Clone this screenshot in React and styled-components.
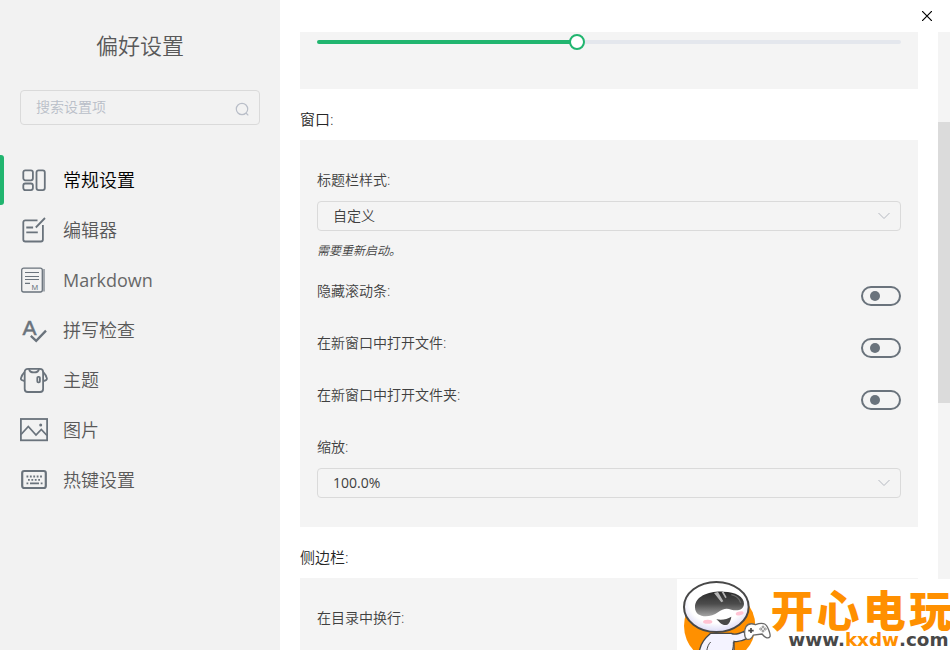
import React, { useState } from "react";
import styled, { createGlobalStyle } from "styled-components";

const GlobalStyle = createGlobalStyle`
  * {
    box-sizing: border-box;
  }
  body {
    margin: 0;
    background: #ffffff;
    color: #404040;
    font-family: "Open Sans", "Noto Sans CJK SC", sans-serif;
    font-size: 14px;
    font-weight: 350;
    overflow: hidden;
  }
  input, select, button {
    font-family: inherit;
    font-weight: inherit;
  }
`;

const Page = styled.div`
  display: flex;
  height: 100vh;
`;

/* sidebar */
const Sidebar = styled.aside`
  flex: 0 0 280px;
  padding-top: 30px;
  background: #f2f2f2;
`;
const Title = styled.h1`
  margin: 0;
  font-size: 22px;
  font-weight: 350;
  line-height: 30px;
  text-align: center;
  color: #595959;
`;
const Search = styled.label`
  display: flex;
  align-items: center;
  height: 35px;
  margin: 30px 20px;
  padding: 0 10px 2px 15px;
  border: 1px solid #dadada;
  border-radius: 4px;
  svg {
    margin-top: 5px;
  }
`;
const SearchInput = styled.input`
  flex: 1;
  min-width: 0;
  padding: 0;
  border: none;
  outline: none;
  background: none;
  font-size: 14px;
  color: #595959;
  &::placeholder {
    color: #b9bec8;
  }
`;
const NavItem = styled.a`
  display: flex;
  align-items: center;
  gap: 15px;
  height: 50px;
  padding-left: 20px;
  position: relative;
  font-size: 18px;
  text-decoration: none;
  color: ${(props) => (props.$active ? "#000000" : "#595959")};
  &::before {
    content: "";
    position: absolute;
    left: 0;
    top: 0;
    width: 4px;
    height: 100%;
    border-radius: 0 3px 3px 0;
    background: ${(props) => (props.$active ? "#21b56f" : "transparent")};
  }
`;
const NavText = styled.span`
  padding-bottom: ${(props) => (props.$latin ? "0" : "2px")};
  font-weight: ${(props) => (props.$latin ? 400 : 350)};
  opacity: ${(props) => (props.$latin ? 0.9 : 1)};
`;
const NavIcon = styled.svg`
  width: 28px;
  height: 28px;
  fill: none;
  stroke: #6a737c;
  stroke-width: 1.8;
`;

/* right side */
const Main = styled.main`
  flex: 1;
  min-width: 0;
  display: flex;
  flex-direction: column;
`;
const TitleBar = styled.div`
  flex: 0 0 32px;
  display: flex;
  justify-content: flex-end;
`;
const CloseButton = styled.button`
  display: flex;
  align-items: center;
  justify-content: center;
  width: 46px;
  padding: 0;
  border: none;
  background: none;
`;
const Body = styled.div`
  flex: 1;
  min-height: 0;
  display: flex;
`;
const Content = styled.div`
  flex: 1;
  min-width: 0;
  padding: 0 20px;
  overflow: hidden;
`;
const Track = styled.div`
  flex: 0 0 12px;
  display: grid;
  grid-template-rows: 90fr 281fr 247fr;
  background: #f4f4f4;
`;
const Thumb = styled.div`
  grid-row: 2;
  background: #dbdbdb;
`;
const SectionTitle = styled.h2`
  margin: 0;
  padding: 20px 0 10px;
  font-size: 15px;
  font-weight: 350;
  line-height: 21px;
  color: #262626;
`;
const Block = styled.section`
  display: flex;
  flex-direction: column;
  gap: 20px;
  padding: ${(props) => (props.$cut ? "2px 17px 39px" : "29px 17px")};
  background: #f4f4f4;
`;
const Label = styled.label`
  display: block;
  line-height: 22px;
  color: #404040;
`;
const Range = styled.input`
  appearance: none;
  display: block;
  width: 100%;
  height: 16px;
  margin: 0;
  background: none;
  &::-webkit-slider-runnable-track {
    height: 4px;
    border-radius: 2px;
    background: linear-gradient(to right, #21b56f var(--fill), #e4e7ed var(--fill));
  }
  &::-webkit-slider-thumb {
    appearance: none;
    width: 16px;
    height: 16px;
    margin-top: -6px;
    border: 2px solid #21b56f;
    border-radius: 50%;
    background: #ffffff;
  }
`;
const SelectBox = styled.div`
  position: relative;
  margin-top: 10px;
  svg {
    position: absolute;
    right: 11px;
    top: 9px;
    pointer-events: none;
  }
`;
const Select = styled.select`
  appearance: none;
  display: block;
  width: 100%;
  height: 30px;
  padding: 0 15px 2px;
  border: 1px solid #dadada;
  border-radius: 4px;
  background: none;
  font-size: 14px;
  font-weight: ${(props) => (props.$latin ? 400 : 350)};
  color: #404040;
`;
const Note = styled.div`
  margin-top: 11px;
  font-size: 12px;
  font-style: italic;
  line-height: 18px;
  color: #404040;
`;
const SwitchRow = styled.div`
  display: flex;
  justify-content: space-between;
  align-items: flex-start;
  height: 32px;
`;
const Switch = styled.input`
  appearance: none;
  display: flex;
  align-items: center;
  justify-content: ${(props) => (props.checked ? "flex-end" : "flex-start")};
  width: 40px;
  height: 20px;
  margin: 6px 0 0;
  padding: 0 7px;
  border: 2px solid #6a737c;
  border-radius: 10px;
  &::before {
    content: "";
    width: 10px;
    height: 10px;
    border-radius: 50%;
    background: #6a737c;
  }
`;
const Badge = styled.svg`
  position: fixed;
  right: 0;
  bottom: 0;
  width: 273px;
  height: 71px;
  background: #ffffff;
`;

const GeneralIcon = () => (
  <NavIcon viewBox="0 0 28 28">
    <rect x="3.3" y="4.3" width="9.6" height="10" rx="2" />
    <rect x="3.3" y="17.5" width="9.6" height="6.6" rx="2" />
    <rect x="16.5" y="4.3" width="8.3" height="19.8" rx="2" />
  </NavIcon>
);

const EditorIcon = () => (
  <NavIcon viewBox="0 0 28 28">
    <path d="M17.5 4.3H5.3a2 2 0 0 0-2 2v17.2a2 2 0 0 0 2 2h15.6a2 2 0 0 0 2-2V9" />
    <path d="M25 2L15.8 11.5M6.3 11.5h6.8M6.3 16.3h11.5" />
  </NavIcon>
);

const MarkdownIcon = () => (
  <NavIcon viewBox="0 0 28 28">
    <path d="M23.8 3v22.5" stroke="#a3a8ae" strokeWidth="2.4" />
    <rect x="1.7" y="2.2" width="20.6" height="23.8" rx="2" strokeWidth="1.3" />
    <path d="M5 6.5h14M5 10.5h14M5 13.5h14M5 17.3h5" strokeWidth="1.2" />
    <text x="11.6" y="23.8" fontSize="8" fontFamily="Liberation Sans" fill="#6a737c" stroke="none">M</text>
  </NavIcon>
);

const SpellIcon = () => (
  <NavIcon viewBox="0 0 28 28">
    <text x="2.4" y="18.6" fontSize="21" fontWeight="400" fontFamily="Liberation Sans" fill="#6a737c" style={{ strokeWidth: 0.5 }}>A</text>
    <path d="M10.8 19.8l5.4 5L26 14.6" strokeWidth="2.3" />
  </NavIcon>
);

const ThemeIcon = () => (
  <NavIcon viewBox="0 0 28 28">
    <path d="M8.500 2.800H8C6 2.800 4.700 3.800 4.700 6v17a3 3 0 0 0 3 3h12.400a3 3 0 0 0 3-3V6c0-2.200-1.300-3.200-3.300-3.200z" />
    <path d="M9 3c.8 4.600 9.200 4.600 10 0M4.700 5.800C2.500 8 1.300 10.500 .9 12.400c-.2 1.200 1.600 2.200 3.600 2.600M23.100 5.800c2.200 2.200 3.400 4.700 3.800 6.600 .2 1.200-1.600 2.200-3.600 2.600" />
    <rect x="17.300" y="10.800" width="2.600" height="5.500" rx="1" />
  </NavIcon>
);

const ImageIcon = () => (
  <NavIcon viewBox="0 0 28 28">
    <rect x="0.900" y="3" width="26.200" height="21.300" />
    <path d="M1 18.500l7.300-8L16 19l5.300-5.500 5.700 6" />
    <circle cx="20.700" cy="9" r="1.500" fill="#6a737c" stroke="none" />
  </NavIcon>
);

const KeyboardIcon = () => (
  <NavIcon viewBox="0 0 28 28">
    <rect x="2.200" y="5" width="23.600" height="17" rx="2" strokeWidth="2.200" />
    <path d="M6.500 10.500h16" strokeDasharray="1.800 1.600" />
    <path d="M8 13.900h13" strokeDasharray="1.800 1.600" />
    <path d="M6.500 17.400h1.800M10 17.400h9M20.700 17.400h1.800" />
  </NavIcon>
);

const Chevron = () => (
  <svg width="12" height="12" viewBox="0 0 12 12" fill="none" stroke="#b4b8c0">
    <path d="M0.500 3l5.500 5.500L11.500 3" />
  </svg>
);

const SiteBadge = () => (
  <Badge viewBox="21 27 819 213">
    <defs>
      <linearGradient id="visor" x1="0" y1="0" x2="0" y2="1">
        <stop offset="0" stopColor="#2b2b2b" />
        <stop offset="0.500" stopColor="#4c4c4c" />
        <stop offset="1" stopColor="#a5a5a5" />
      </linearGradient>
      <radialGradient id="head" cx="0.500" cy="0.400" r="0.600">
        <stop offset="0.700" stopColor="#ffffff" />
        <stop offset="1" stopColor="#dcdaf6" />
      </radialGradient>
    </defs>
    <circle cx="149" cy="168" r="107" fill="#ff9000" />
    <path d="M88 244C92 218 106 204 122 190h62c10 6 22 2 38-6l8 22c-14 8-26 10-38 8v30z" fill="#f4f3ff" stroke="#484848" strokeWidth="4" />
    <path d="M110 244c2-14 6-22 12-28M190 216c0 10 0 18-4 28" fill="none" stroke="#484848" strokeWidth="3" />
    <ellipse cx="139" cy="111" rx="97" ry="75" fill="url(#head)" stroke="#484848" strokeWidth="6" />
    <path d="M75 112C75 78 118 63 160 65c38 0 62 16 62 36 0 17-18 24-38 18-16-5-26-2-40 8-24 18-69 18-69-15z" fill="url(#visor)" />
    <path d="M132 69l12-3 16 28-6 3zM155 66l6 0 9 16-4 3z" fill="#b4b4b4" />
    <path d="M184 74c14 3 24 12 28 24" fill="none" stroke="#6b6b6b" strokeWidth="4" />
    <ellipse cx="113" cy="155" rx="14" ry="6" fill="#ffc3d3" />
    <ellipse cx="209" cy="130" rx="12" ry="6" fill="#ffc3d3" transform="rotate(-12 209 130)" />
    <path d="M139 148c18 3 32 0 45-8-3 18-10 27-22 25-11-2-13-10-23-17z" fill="#484848" />
    <path d="M228 170c6-9 18-10 28-6 8-3 18-7 28-2 10 5 18 32 16 38-6 8-16 2-24-8l-26 3c-4 10-12 16-20 12-8-5-8-27-2-37z" fill="#ffffff" stroke="#686868" strokeWidth="4" />
    <path d="M243 174v15M235 182h16" stroke="#484848" strokeWidth="5" />
    <g fill="none" stroke="#585858" strokeWidth="2">
      <circle cx="279" cy="171" r="3" />
      <circle cx="279" cy="183" r="3" />
      <circle cx="272" cy="177" r="3" />
      <circle cx="286" cy="177" r="3" />
    </g>
    <text x="302 440 579 718" y="170" fontSize="128" fontWeight="900" fontFamily="Noto Sans CJK SC" fill="#ff9000">开心电玩</text>
    <text x="355" y="227" fontSize="55" fontWeight="700" fontFamily="DejaVu Sans" fill="#484848" stroke="#ffffff" strokeWidth="6" paintOrder="stroke">
      www.<tspan fill="#ff9000">kxdw</tspan>.com
    </text>
  </Badge>
);

const navItems = [
  { id: "general", name: "常规设置", Icon: GeneralIcon },
  { id: "editor", name: "编辑器", Icon: EditorIcon },
  { id: "markdown", name: "Markdown", Icon: MarkdownIcon, latin: true },
  { id: "spelling", name: "拼写检查", Icon: SpellIcon },
  { id: "theme", name: "主题", Icon: ThemeIcon },
  { id: "image", name: "图片", Icon: ImageIcon },
  { id: "keys", name: "热键设置", Icon: KeyboardIcon },
];

const SelectItem = ({ id, label, options, note, latin }) => (
  <div>
    <Label htmlFor={id}>{label}</Label>
    <SelectBox>
      <Select id={id} $latin={latin}>
        {options.map((option) => (
          <option key={option}>{option}</option>
        ))}
      </Select>
      <Chevron />
    </SelectBox>
    {note && <Note>{note}</Note>}
  </div>
);

const SwitchItem = ({ id, label }) => {
  const [on, setOn] = useState(false);
  return (
    <SwitchRow>
      <Label htmlFor={id}>{label}</Label>
      <Switch id={id} type="checkbox" checked={on} onChange={() => setOn(!on)} />
    </SwitchRow>
  );
};

const App = () => {
  const [active, setActive] = useState("general");
  const [delay, setDelay] = useState(4440);

  return (
    <Page>
      <GlobalStyle />
      <Sidebar>
        <Title>偏好设置</Title>
        <Search>
          <SearchInput type="text" placeholder="搜索设置项" />
          <svg width="14" height="14" viewBox="0 0 14 14" fill="none" stroke="#b9bec8" strokeWidth="1.200">
            <circle cx="7" cy="7" r="5.700" />
            <path d="M11 11l2.300 2.300" />
          </svg>
        </Search>
        <nav>
          {navItems.map(({ id, name, Icon, latin }) => (
            <NavItem key={id} href={`#${id}`} $active={id === active} onClick={() => setActive(id)}>
              <Icon />
              <NavText $latin={latin}>{name}</NavText>
            </NavItem>
          ))}
        </nav>
      </Sidebar>
      <Main>
        <TitleBar>
          <CloseButton aria-label="Close">
            <svg width="10" height="10" viewBox="0 0 10 10" stroke="#000000" strokeWidth="1.200">
              <path d="M0 0l10 10M10 0L0 10" />
            </svg>
          </CloseButton>
        </TitleBar>
        <Body>
          <Content>
            <Block $cut>
              <Range
                type="range"
                aria-label="Delay"
                min="0"
                max="10000"
                value={delay}
                onChange={(e) => setDelay(Number(e.target.value))}
                style={{ "--fill": `${delay / 100}%` }}
              />
            </Block>
            <SectionTitle>窗口:</SectionTitle>
            <Block>
              <SelectItem id="titlebar" label="标题栏样式:" options={["自定义"]} note="需要重新启动。" />
              <SwitchItem id="scrollbar" label="隐藏滚动条:" />
              <SwitchItem id="files" label="在新窗口中打开文件:" />
              <SwitchItem id="folders" label="在新窗口中打开文件夹:" />
              <SelectItem id="zoom" label="缩放:" options={["100.0%"]} latin />
            </Block>
            <SectionTitle>侧边栏:</SectionTitle>
            <Block>
              <SwitchItem id="wrap" label="在目录中换行:" />
            </Block>
          </Content>
          <Track>
            <Thumb />
          </Track>
        </Body>
      </Main>
      <SiteBadge />
    </Page>
  );
};

export default App;
